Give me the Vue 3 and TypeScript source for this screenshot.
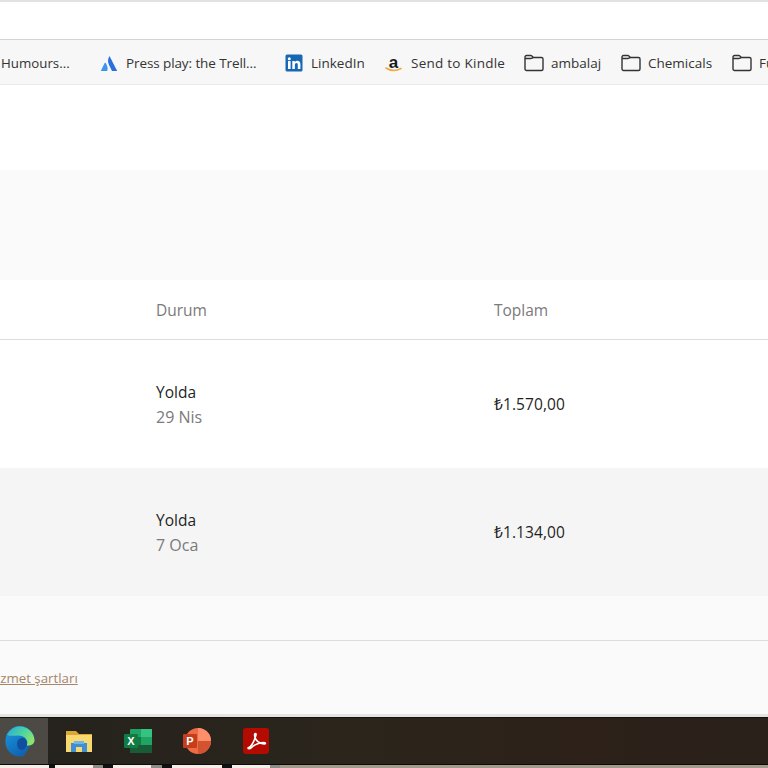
<script setup lang="ts">
interface Order {
  status: string
  date: string
  total: string
}

const orders: Order[] = [
  { status: 'Yolda', date: '29 Nis', total: '₺1.570,00' },
  { status: 'Yolda', date: '7 Oca', total: '₺1.134,00' },
]

// strip of desktop showing under the taskbar, with the running-app notches
const strip = [
  { w: 49, c: '#f6efe9' },
  { w: 6, c: '#111' },
  { w: 38, c: '#f8ece6' },
  { w: 10, c: '#8f8c86' },
  { w: 10, c: '#111' },
  { w: 38, c: '#f8ece6' },
  { w: 11, c: '#8f8c86' },
  { w: 10, c: '#111' },
  { w: 50, c: '#f8ece6' },
  { w: 10, c: '#111' },
  { w: 38, c: '#f6efe9' },
  { w: 10, c: '#8f8c86' },
  { w: 488, c: '#a39a8a' },
]
</script>

<template>
  <div class="screen">
    <div class="address-bar" />

    <nav class="bookmarks">
      <span class="mark humours">Humours...</span>
      <span class="mark trello">
        <svg width="18" height="18" viewBox="0 0 18 18">
          <path d="M9.500 2C8 4.500 7.500 7 8.600 10l3.400 7h5.200z" fill="#2a6fdb" />
          <path d="M5.700 9c-.4-.5-.9-.4-1.200.2L.8 17h6.400c1-2.600.2-5.600-1.500-8z" fill="#3f94f0" />
        </svg>
        Press play: the Trell...
      </span>
      <span class="mark linkedin">
        <svg width="18" height="18" viewBox="0 0 18 18">
          <rect x="0.500" y="0.500" width="17" height="17" rx="1.500" fill="#1668b5" />
          <rect x="3" y="7" width="2.600" height="8" fill="#fff" />
          <circle cx="4.300" cy="4.700" r="1.500" fill="#fff" />
          <path d="M7.300 7h2.500v1.200c.5-.8 1.400-1.400 2.600-1.400 2.100 0 3 1.300 3 3.500V15h-2.600v-4.200c0-1.100-.4-1.800-1.300-1.800-1 0-1.600.7-1.600 1.900V15H7.300z" fill="#fff" />
        </svg>
        LinkedIn
      </span>
      <span class="mark kindle">
        <svg width="20" height="20" viewBox="0 0 20 20">
          <path d="M1 15c4.500 3 10.500 3 15 .5" fill="none" stroke="#f0a63a" stroke-width="1.600" stroke-linecap="round" />
          <text x="8.500" y="14.500" text-anchor="middle" class="amazon-a">a</text>
        </svg>
        Send to Kindle
      </span>
      <span v-for="name in ['ambalaj', 'Chemicals', 'Fun']" :key="name" class="mark folder">
        <svg width="20" height="18" viewBox="0 0 20 18">
          <path
            d="M1 4.500V3a1.500 1.500 0 0 1 1.500-1.500h4.300c.5 0 .8.200 1.100.5L9.500 3.500h8A1.500 1.500 0 0 1 19 5v10a1.500 1.500 0 0 1-1.500 1.500h-15A1.500 1.500 0 0 1 1 15V4.500h5.800c.5 0 .9-.2 1.200-.5l1.500-.5"
            fill="none"
            stroke="#333"
            stroke-width="1.400"
          />
        </svg>
        {{ name }}
      </span>
    </nav>

    <div class="blank" />
    <div class="band" />

    <div class="table-head">
      <span>Durum</span>
      <span>Toplam</span>
    </div>

    <div v-for="(order, i) in orders" :key="order.total" class="row" :class="{ alt: i % 2 === 1 }">
      <div class="state">
        <div class="status">{{ order.status }}</div>
        <div class="date">{{ order.date }}</div>
      </div>
      <div class="total">{{ order.total }}</div>
    </div>

    <div class="table-end" />

    <footer class="foot">
      <a class="terms">Hizmet şartları</a>
    </footer>

    <div class="taskbar">
      <span class="task active">
        <svg width="32" height="32" viewBox="0 0 32 32">
          <defs>
            <linearGradient id="edgeA" x1="0" y1="0" x2="1" y2="0.600">
              <stop offset="0" stop-color="#2ba6d6" />
              <stop offset="0.600" stop-color="#4fd6a0" />
              <stop offset="1" stop-color="#8fe36b" />
            </linearGradient>
            <linearGradient id="edgeB" x1="0" y1="0" x2="0.600" y2="1">
              <stop offset="0" stop-color="#1c9be0" />
              <stop offset="1" stop-color="#0f5fb0" />
            </linearGradient>
          </defs>
          <path d="M1.500 16a14.500 14.500 0 0 1 29-1c0 3-2 5-5 5.500-1 3-3 7-6 10.500-2 .5-3 .5-4 .5A14.500 14.500 0 0 1 1.500 16z" fill="url(#edgeB)" />
          <path d="M3 10C6 4 11 1.500 16 1.500 24 1.500 30.500 8 30.500 15.500c0 3-3 5-6.500 5-1 0-1.500-.3-1-1 1.500-4-2-9-9-9-4 0-8 1-10.500-.5z" fill="url(#edgeA)" />
          <path d="M13 19c0-3.500 2.500-6 5.500-6 2.500 0 4.500 2 4.500 5 0 3.500-2.500 7-5.500 7-2.500 0-4.500-3-4.500-6z" fill="#0f4f9e" />
        </svg>
      </span>
      <span class="task explorer">
        <svg width="28" height="26" viewBox="0 0 28 26">
          <path d="M1 3h10l3 3h13v18H1z" fill="#d9a838" />
          <rect x="1" y="7" width="26" height="17" fill="#f7d970" />
          <rect x="6" y="15" width="16" height="9" fill="#3f8fd6" />
          <rect x="11" y="19" width="6" height="5" fill="#f7d970" />
          <rect x="9" y="13" width="10" height="3" fill="#6fb5ea" />
        </svg>
      </span>
      <span class="task excel">
        <svg width="30" height="26" viewBox="0 0 30 26">
          <rect x="7" y="1" width="22" height="24" rx="1" fill="#21a366" />
          <rect x="18" y="1" width="11" height="8" fill="#33c481" />
          <rect x="18" y="9" width="11" height="8" fill="#21a366" />
          <rect x="7" y="9" width="11" height="8" fill="#107c41" />
          <rect x="7" y="17" width="22" height="8" fill="#185c37" />
          <rect x="1" y="6" width="14" height="14" rx="1" fill="#0f7b45" />
          <text x="8" y="17" text-anchor="middle" class="app-letter">X</text>
        </svg>
      </span>
      <span class="task powerpoint">
        <svg width="30" height="28" viewBox="0 0 30 28">
          <circle cx="16" cy="14" r="13" fill="#ed6c47" />
          <path d="M16 1a13 13 0 0 1 13 13H16z" fill="#ff8f6b" />
          <path d="M16 14h13a13 13 0 0 1-13 13z" fill="#d35230" />
          <rect x="1" y="7" width="14" height="14" rx="1" fill="#c43e1c" />
          <text x="8" y="18" text-anchor="middle" class="app-letter">P</text>
        </svg>
      </span>
      <span class="task acrobat">
        <svg width="26" height="26" viewBox="0 0 26 26">
          <rect width="26" height="26" rx="3" fill="#b30b00" />
          <path d="M5 20c3-1 6-6 8-13 .5-2-1.500-2-1.500 0 0 5 5 9 9.500 9 2 0 2-1.500 0-1.500-4 0-10 2-13 5.500-1 1-3 1-3 0z" fill="none" stroke="#fff" stroke-width="1.600" />
        </svg>
      </span>
    </div>

    <div class="desk-strip">
      <span v-for="(s, i) in strip" :key="i" :style="{ width: s.w + 'px', background: s.c }" />
    </div>
  </div>
</template>

<style>
html,
body {
  margin: 0;
  background: #fff;
}
</style>

<style scoped>
.screen {
  width: 768px;
  height: 768px;
  overflow: hidden;
  display: flex;
  flex-direction: column;
  font-family: "Open Sans", "Noto Sans", sans-serif;
  color: #202020;
}
.address-bar {
  height: 37px;
  flex: none;
  border-top: 2px solid #e2e2e2;
  border-bottom: 1px solid #d4d4d4;
  background: #fff;
}
.bookmarks {
  height: 44px;
  flex: none;
  box-sizing: border-box;
  padding-top: 2px;
  display: flex;
  align-items: center;
  background: #f7f7f7;
  border-bottom: 1px solid #e9e9e9;
  font-size: 13.500px;
  color: #333;
  white-space: nowrap;
  height: 45px;
}
.mark {
  display: flex;
  align-items: center;
  flex: none;
  gap: 8px;
}
.humours {
  margin-left: 1px;
  width: 99px;
  font-size: 13.300px;
}
.trello {
  width: 185px;
  letter-spacing: -0.1px;
}
.linkedin {
  width: 100px;
}
.kindle {
  width: 139px;
  gap: 6px;
  letter-spacing: 0.25px;
}
.folder {
  width: 97px;
  gap: 7px;
}
.folder + .folder {
  width: 111px;
}
.amazon-a {
  font-family: "Liberation Sans", sans-serif;
  font-size: 17px;
  font-weight: 700;
  fill: #1a1a1a;
}
.blank {
  height: 85px;
  flex: none;
  background: #fff;
}
.band {
  height: 110px;
  flex: none;
  background: #fafafa;
}
.table-head {
  height: 59px;
  flex: none;
  display: grid;
  grid-template-columns: 338px 1fr;
  align-items: center;
  padding-left: 156px;
  background: #fff;
  border-bottom: 1px solid #dcdcdc;
  font-size: 15.500px;
  color: #7a7a7a;
}
.row {
  height: 128px;
  flex: none;
  display: grid;
  grid-template-columns: 338px 1fr;
  align-items: center;
  padding-left: 156px;
  background: #fff;
  font-size: 15.500px;
}
.row.alt {
  background: #f5f5f5;
}
.state {
  padding-top: 2px;
}
.status {
  line-height: 25px;
  color: #1f1f1f;
}
.date {
  line-height: 25px;
  font-size: 16px;
  color: #7a7a7a;
}
.total {
  color: #1f1f1f;
  letter-spacing: 0.1px;
}
.table-end {
  height: 44px;
  flex: none;
  background: #fafafa;
  border-bottom: 1px solid #dcdcdc;
}
.foot {
  height: 73px;
  flex: none;
  display: flex;
  align-items: center;
  background: #fafafa;
  border-bottom: 3px solid #e4e4e4;
  font-size: 13.300px;
  overflow: hidden;
}
.terms {
  margin-left: -13px;
  color: #a5866a;
  text-decoration: underline;
}
.taskbar {
  height: 46px;
  flex: none;
  display: flex;
  align-items: center;
  background: linear-gradient(90deg, #24221d, #2b251c 45%, #2d2119 75%, #2a211b);
  border-top: 1px solid #111;
  border-bottom: 1px solid #0c0c0c;
}
.task {
  flex: none;
  width: 59px;
  height: 100%;
  display: flex;
  align-items: center;
  justify-content: center;
}
.task.active {
  width: 48px;
  padding-right: 8px;
  box-sizing: border-box;
  background: #4d4a45;
  margin-right: 1px;
}
.app-letter {
  font-family: "Liberation Sans", sans-serif;
  font-size: 11px;
  font-weight: 700;
  fill: #fff;
}
.desk-strip {
  flex: 1;
  display: flex;
}
.desk-strip span {
  flex: none;
}
</style>
